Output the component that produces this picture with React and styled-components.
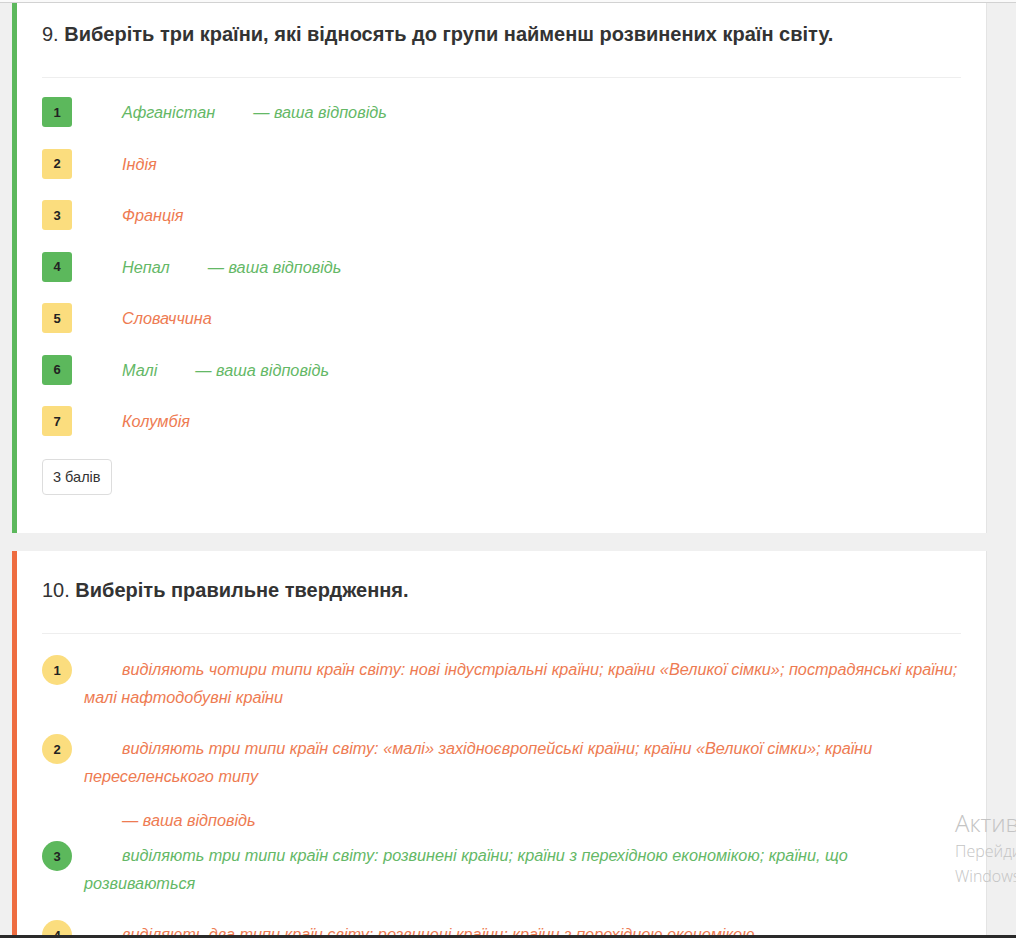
import React from "react";
import styled, { createGlobalStyle } from "styled-components";

const GREEN = "#5cb85c";
const GREEN_TEXT = "#64b866";
const ORANGE = "#ee6c40";
const ORANGE_TEXT = "#ee7b52";
const YELLOW = "#fbdd7e";

const Global = createGlobalStyle`
  html, body {
    margin: 0;
    padding: 0;
    background: #f0f0f0;
    overflow: hidden;
  }
  body {
    font-family: "Liberation Sans", Arial, sans-serif;
    color: #333;
  }
`;

const Page = styled.div`
  height: 938px;
  overflow: hidden;
  position: relative;
`;

const TopLine = styled.div`
  height: 2px;
  background: #fafafa;
  border-bottom: 1px solid #d2d2d2;
`;

const Feed = styled.div`
  display: flex;
  flex-direction: column;
  gap: 18px;
  padding-left: 12px;
  width: 975px;
`;

const Card = styled.section`
  background: #fff;
  border-left: 5px solid ${(p) => p.$accent};
  border-right: 1px solid #e4e4e4;
  padding: ${(p) => p.$top}px 25px 38px 25px;
`;

const Title = styled.h2`
  margin: 0;
  font-size: 20px;
  line-height: 24px;
  font-weight: bold;
  color: #333;
  span {
    font-weight: normal;
  }
`;

const Divider = styled.hr`
  border: 0;
  border-top: 1px solid #eee;
  margin: 31px 0 ${(p) => p.$below}px;
`;

const ShortList = styled.div`
  display: flex;
  flex-direction: column;
  gap: 21.5px;
`;

const LongList = styled.div`
  display: flex;
  flex-direction: column;
`;

const Row = styled.div`
  display: flex;
  align-items: flex-start;
  margin-bottom: ${(p) => p.$after || 0}px;
`;

const Badge = styled.div`
  flex: none;
  width: 30px;
  height: 30px;
  border-radius: ${(p) => (p.$round ? "50%" : "3px")};
  background: ${(p) => (p.$right ? GREEN : YELLOW)};
  color: #222;
  font-size: 13px;
  font-weight: bold;
  display: flex;
  align-items: center;
  justify-content: center;
`;

const Body = styled.div`
  flex: 1;
  padding-left: 12px;
  font-style: italic;
  font-size: 16.25px;
  line-height: ${(p) => p.$lh}px;
  color: ${(p) => (p.$right ? GREEN_TEXT : ORANGE_TEXT)};
`;

const Para = styled.p`
  margin: 0;
  text-indent: 38px;
`;

const Mine = styled.span`
  margin-left: 38px;
`;

const MineLine = styled.p`
  margin: 16px 0 0;
  text-indent: 38px;
  color: ${(p) => (p.$right ? GREEN_TEXT : ORANGE_TEXT)};
`;

const Score = styled.div`
  display: inline-block;
  margin-top: 23px;
  padding: 6px 10px;
  line-height: 22px;
  font-size: 14.5px;
  color: #333;
  border: 1px solid #ddd;
  border-radius: 4px;
  background: #fff;
`;

const Watermark = styled.div`
  position: absolute;
  left: 955px;
  top: 807px;
  white-space: nowrap;
  color: #c4c4c4;
  font-family: "Open Sans", "Noto Sans", sans-serif;
  font-weight: 300;
  div:first-child {
    font-size: 24px;
    line-height: 32px;
  }
  div {
    font-size: 16px;
    line-height: 25px;
  }
`;

const BottomEdge = styled.div`
  position: absolute;
  left: 0;
  right: 0;
  bottom: 0;
  height: 3px;
  background: #2a2a2a;
`;

const countries = [
  { n: 1, text: "Афганістан", right: true, mine: true },
  { n: 2, text: "Індія" },
  { n: 3, text: "Франція" },
  { n: 4, text: "Непал", right: true, mine: true },
  { n: 5, text: "Словаччина" },
  { n: 6, text: "Малі", right: true, mine: true },
  { n: 7, text: "Колумбія" },
];

const statements = [
  {
    n: 1,
    text: "виділяють чотири типи країн світу: нові індустріальні країни; країни «Великої сімки»; пострадянські країни; малі нафтодобувні країни",
  },
  {
    n: 2,
    text: "виділяють три типи країн світу: «малі» західноєвропейські країни; країни «Великої сімки»; країни переселенського типу",
    mine: true,
  },
  {
    n: 3,
    text: "виділяють три типи країн світу: розвинені країни; країни з перехідною економікою; країни, що розвиваються",
    right: true,
  },
  {
    n: 4,
    text: "виділяють два типи країн світу: розвинені країни; країни з перехідною економікою",
  },
];

export default function App() {
  return (
    <Page>
      <Global />
      <TopLine />
      <Feed>
        <Card $accent={GREEN} $top={19}>
          <Title>
            <span>9. </span>Виберіть три країни, які відносять до групи найменш розвинених країн світу.
          </Title>
          <Divider $below={19} />
          <ShortList>
            {countries.map((c) => (
              <Row key={c.n}>
                <Badge $right={c.right}>{c.n}</Badge>
                <Body $right={c.right} $lh={30}>
                  <Para>
                    {c.text}
                    {c.mine && <Mine>— ваша відповідь</Mine>}
                  </Para>
                </Body>
              </Row>
            ))}
          </ShortList>
          <Score>3 балів</Score>
        </Card>
        <Card $accent={ORANGE} $top={27}>
          <Title>
            <span>10. </span>Виберіть правильне твердження.
          </Title>
          <Divider $below={21} />
          <LongList>
            {statements.map((s) => (
              <Row key={s.n} $after={s.mine ? 7 : 23}>
                <Badge $round $right={s.right}>{s.n}</Badge>
                <Body $right={s.right} $lh={28}>
                  <Para>{s.text}</Para>
                  {s.mine && <MineLine $right={s.right}>— ваша відповідь</MineLine>}
                </Body>
              </Row>
            ))}
          </LongList>
        </Card>
      </Feed>
      <Watermark>
        <div>Активация Windows</div>
        <div>Перейдите в раздел "Параметры", чтобы</div>
        <div>Windows.</div>
      </Watermark>
      <BottomEdge />
    </Page>
  );
}
